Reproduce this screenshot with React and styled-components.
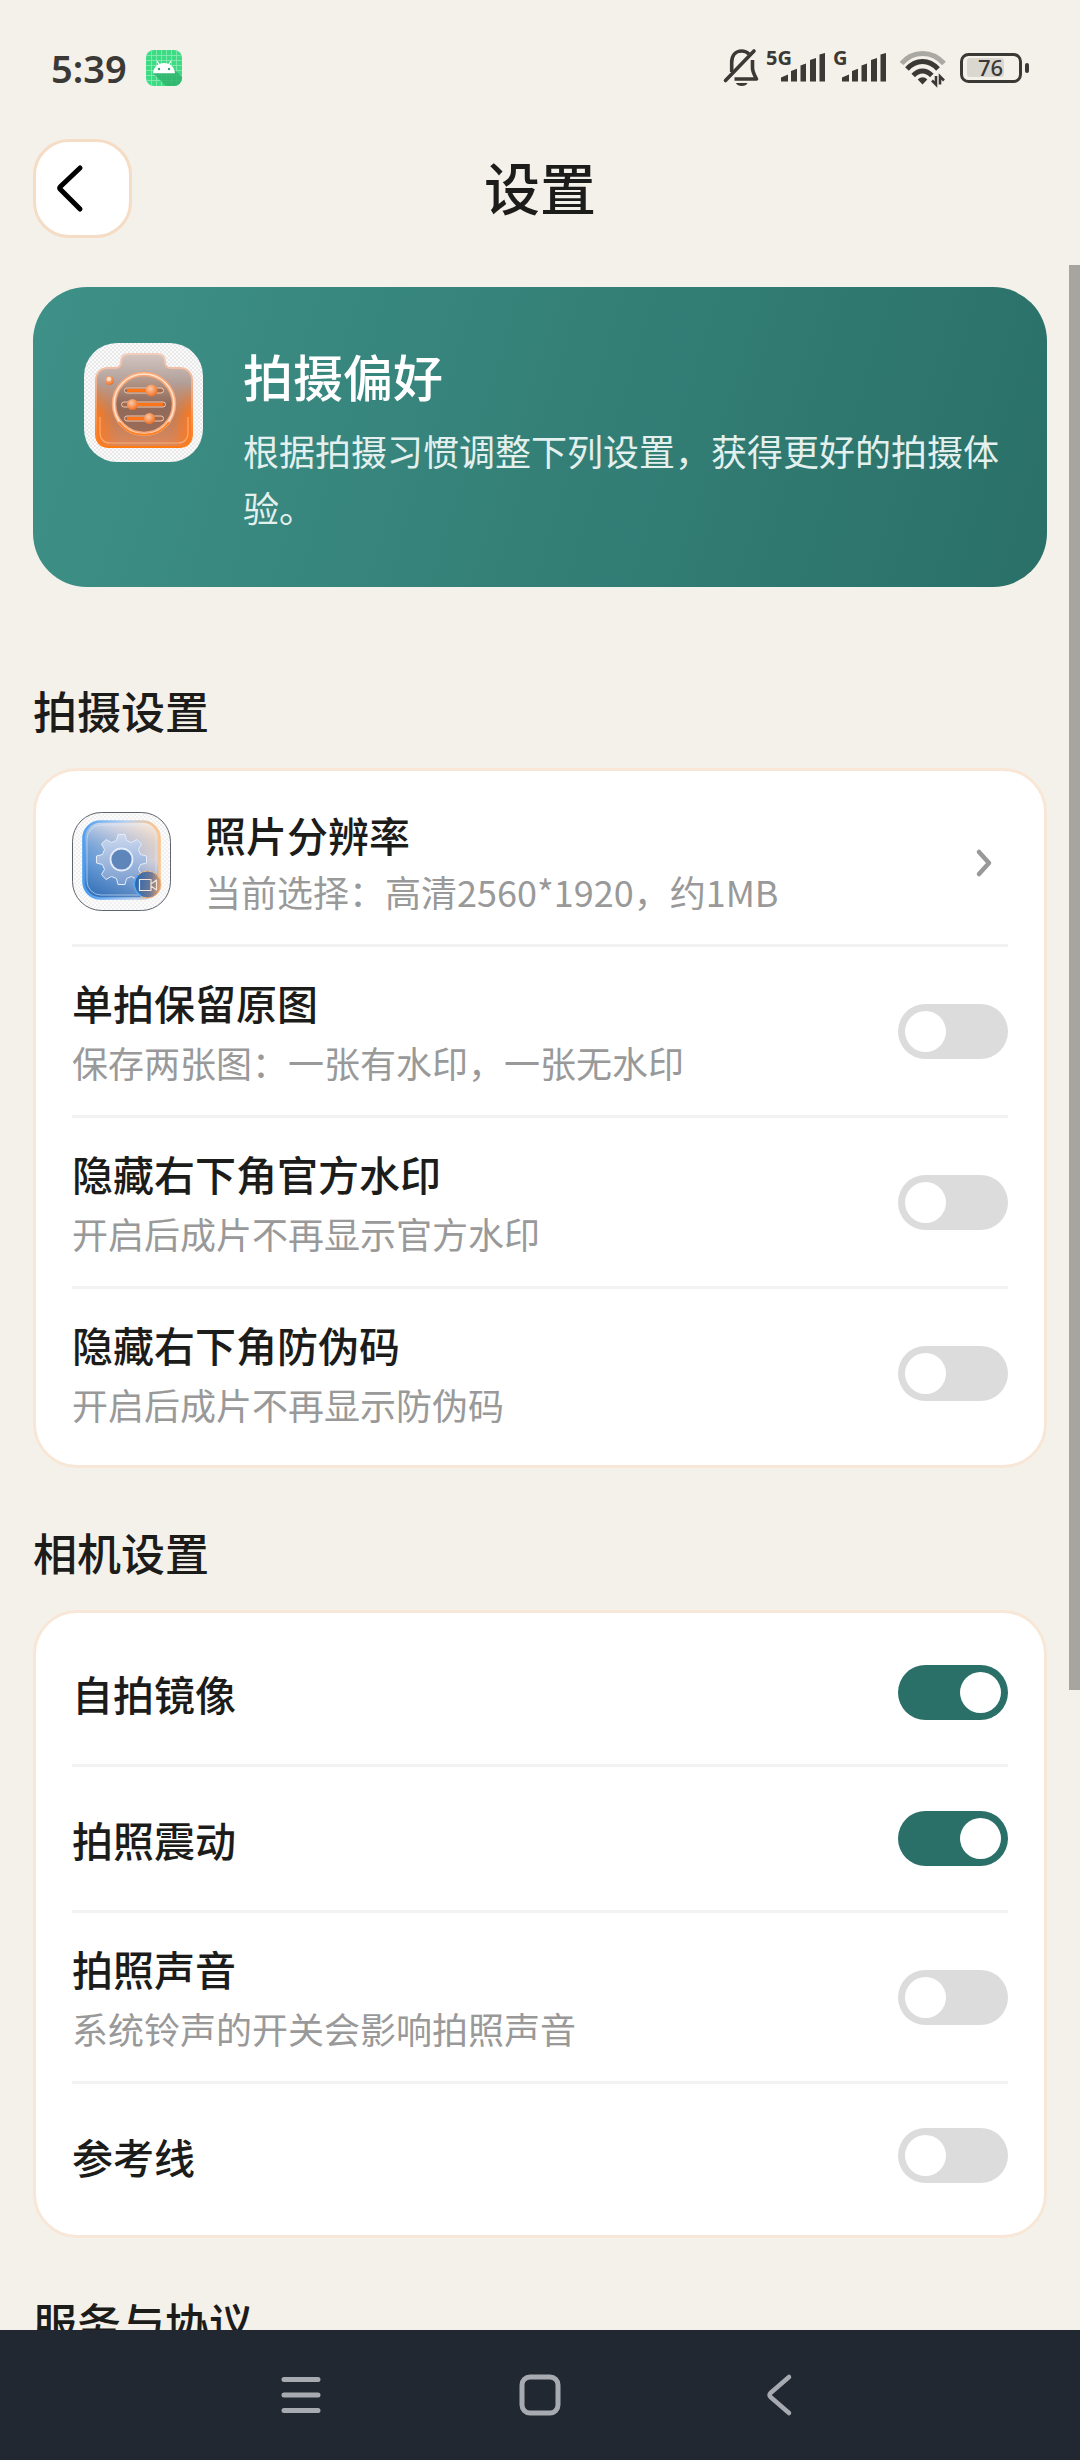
import React, { useId, useState } from 'react'
import styled, { createGlobalStyle } from 'styled-components'

// ── Tokens ────────────────────────────────────────────────────────────────────
const color = {
  page: '#f4f1ea',
  card: '#ffffff',
  cardBorder: '#f8e7d7',
  backBorder: '#f5dcc5',
  divider: '#f2f2f2',
  text: '#1c1c1a',
  muted: '#999999',
  status: '#3b3936',
  primary: '#2a7068',
  primaryLight: '#3e9188',
  off: '#dcdcdc',
  nav: '#222831',
  navIcon: '#a7abb1',
  scrollbar: '#a6a5a0',
}

const font = '"Noto Sans CJK SC", "Noto Sans", sans-serif'
const gutter = '33px'

const GlobalStyle = createGlobalStyle`
  * {
    box-sizing: border-box;
  }

  body {
    margin: 0;
    background: ${color.page};
    color: ${color.text};
    font-family: ${font};
  }

  button {
    font: inherit;
    color: inherit;
    border: none;
    background: none;
    padding: 0;
    cursor: pointer;
  }

  h1, h2, p {
    margin: 0;
  }

  svg {
    display: block;
    flex-shrink: 0;
    overflow: visible;
  }
`

// ── Shell ─────────────────────────────────────────────────────────────────────
const Screen = styled.div`
  height: 100vh;
  display: flex;
  flex-direction: column;
`

const StatusBar = styled.div`
  display: flex;
  align-items: center;
  justify-content: space-between;
  height: 139px;
  padding: 0 51px 3px;
  color: ${color.status};
  flex-shrink: 0;
`

const StatusGroup = styled.div`
  display: flex;
  align-items: center;
  gap: ${({ $gap }) => $gap};
`

const Clock = styled.span`
  font-family: "Noto Sans", sans-serif;
  font-size: 38px;
  font-weight: 600;
  line-height: 40px;
`

const Header = styled.header`
  display: grid;
  grid-template-columns: 99px 1fr 99px;
  align-items: center;
  padding: 0 ${gutter} 27px;
  flex-shrink: 0;
`

const BackButton = styled.button`
  display: flex;
  align-items: center;
  width: 99px;
  height: 99px;
  padding-left: 18px;
  background: ${color.card};
  border: 3px solid ${color.backBorder};
  border-radius: 36px;
`

const PageTitle = styled.h1`
  padding-bottom: 5px;
  font-size: 56px;
  font-weight: 500;
  line-height: 80px;
  text-align: center;
`

const ScrollArea = styled.div`
  position: relative;
  flex: 1;
  min-height: 0;
  overflow: hidden;
`

const ScrollThumb = styled.div`
  position: absolute;
  top: 0;
  right: 0;
  width: 11px;
  height: 69%;
  background: ${color.scrollbar};
`

const Content = styled.main`
  padding: 22px ${gutter} 0;
`

// ── Hero ──────────────────────────────────────────────────────────────────────
const HeroCard = styled.section`
  display: flex;
  align-items: flex-start;
  gap: 40px;
  margin-bottom: 94px;
  padding: 56px 36px 51px 51px;
  border-radius: 54px;
  background: linear-gradient(107deg, ${color.primaryLight}, ${color.primary});
  color: #ffffff;
`

const HeroTitle = styled.h2`
  font-size: 50px;
  font-weight: 500;
  line-height: 64px;
`

const HeroText = styled.p`
  margin-top: 15px;
  font-size: 36px;
  line-height: 57px;
  color: #e3f0ee;
`

// ── Sections ──────────────────────────────────────────────────────────────────
const SectionTitle = styled.h2`
  margin-bottom: 29px;
  font-size: 44px;
  font-weight: 500;
  line-height: 58px;
`

const Card = styled.div`
  margin-bottom: 55px;
  padding: 8px 36px;
  background: ${color.card};
  border: 3px solid ${color.cardBorder};
  border-radius: 44px;
`

const Row = styled.div`
  display: flex;
  align-items: center;
  gap: 34px;
  width: 100%;
  min-height: 143px;
  padding: 26px 0;
  text-align: left;

  ${Card} > * + & {
    border-top: 3px solid ${color.divider};
    min-height: 146px;
  }
`

const RowText = styled.div`
  display: flex;
  flex-direction: column;
  gap: ${({ $tight }) => ($tight ? '2px' : '5px')};
  flex: 1;
  min-width: 0;
`

const RowTitle = styled.label`
  font-size: 41px;
  font-weight: 500;
  line-height: 58px;
`

const RowNote = styled.span`
  font-size: 36px;
  line-height: 53px;
  color: ${color.muted};
`

const Switch = styled.input`
  appearance: none;
  display: flex;
  align-items: center;
  flex-shrink: 0;
  width: 110px;
  height: 55px;
  margin: 0;
  padding: 0 7px;
  border-radius: 28px;
  background: ${color.off};
  cursor: pointer;

  &::before {
    content: '';
    width: 41px;
    height: 41px;
    border-radius: 50%;
    background: #ffffff;
  }

  &:checked {
    justify-content: flex-end;
    background: ${color.primary};
  }
`

// ── System navigation ─────────────────────────────────────────────────────────
const NavBar = styled.nav`
  display: flex;
  justify-content: center;
  height: 130px;
  background: ${color.nav};
  color: ${color.navIcon};
  flex-shrink: 0;
`

const NavButton = styled.button`
  display: flex;
  align-items: center;
  justify-content: center;
  width: 239px;
`

// ── Status icons ──────────────────────────────────────────────────────────────
function AndroidIcon() {
  return (
    <svg width="36" height="36" viewBox="0 0 36 36">
      <defs>
        <clipPath id="android-clip"><rect width="36" height="36" rx="8" /></clipPath>
      </defs>
      <g clipPath="url(#android-clip)">
        <rect width="36" height="36" fill="#3ddc84" />
        <path
          d="M5.5 0V36M10.5 0V36M15.5 0V36M20.5 0V36M25.5 0V36M30.5 0V36M0 5.5H36M0 10.5H36M0 15.5H36M0 20.5H36M0 25.5H36M0 30.5H36"
          stroke="#8ceab5"
          strokeWidth="0.8"
        />
        <path d="M7 23L20 36H36V27L29 20Z" fill="#2fb36c" opacity="0.85" />
        <path d="M7 23.2C7.5 17 12 13 18 13S28.5 17 29 23.2Z" fill="#fff" />
        <path d="M11 11L13.5 15M25 11L22.500 15" stroke="#fff" strokeWidth="1.2" />
        <circle cx="13" cy="19" r="1.2" fill="#2fa868" />
        <circle cx="23" cy="19" r="1.2" fill="#2fa868" />
      </g>
    </svg>
  )
}

function MutedBellIcon() {
  return (
    <svg width="34" height="38" viewBox="0 0 34 38" fill="none" stroke="currentColor" strokeWidth="3.6">
      <path d="M7.7 23V13.5C7.7 6 12 2 17.5 2C20.5 2 23 3 25 5" />
      <path d="M28.5 11V19C28.5 23 30.5 26 32.5 30H10.5" strokeLinejoin="round" />
      <path d="M1.5 31.5L30 2" strokeLinecap="round" />
      <path d="M12 34H23.5C22.5 38 13 38 12 34Z" fill="currentColor" stroke="none" />
    </svg>
  )
}

function SignalIcon({ label, offset }) {
  return (
    <svg width={offset + 44} height="38" viewBox={`0 0 ${offset + 44} 38`} fill="currentColor">
      <text x="0" y="16" fontFamily="Noto Sans" fontSize="20" fontWeight="700">{label}</text>
      <g transform={`translate(${offset} 0)`}>
        <path d="M0 28.5L7 25.5V32.5H0ZM10 22L16 19.8V32.5H10ZM19.5 16.5L25 14.5V32.5H19.5ZM29 11L35 9V32.5H29ZM38.5 5.5L44 4V32.5H38.5Z" />
      </g>
    </svg>
  )
}

function WifiIcon() {
  return (
    <svg width="46" height="38" viewBox="0 0 46 38" fill="none" stroke="currentColor" strokeWidth="5">
      <path d="M1.5 14.5C13 1 32 1 44 14.5" stroke="#aaa8a3" />
      <path d="M7 20C16 10 29 10 38 20" />
      <path d="M13.2 26.5C19 20.5 26 20.5 31.8 26.5" />
      <path d="M17.8 30.5C21 27.5 24.5 27.5 27.3 30.5L22.5 35.5Z" fill="currentColor" stroke="none" />
      <path d="M36 27V35.5L32 31.5M40 35.5V27.5L44 31.5" strokeWidth="2.6" />
    </svg>
  )
}

function BatteryIcon() {
  return (
    <svg width="69" height="30" viewBox="0 0 69 30" fill="currentColor">
      <rect x="1.5" y="1.5" width="59" height="27" rx="7" fill="none" stroke="currentColor" strokeWidth="3" />
      <rect x="7" y="5" width="37" height="19" rx="3" fill="#dad7d0" />
      <rect x="65" y="10" width="4" height="10" rx="2" />
      <text x="18" y="23" fontFamily="Noto Sans" fontSize="22" fontWeight="500">76</text>
    </svg>
  )
}

// ── Artwork ───────────────────────────────────────────────────────────────────
function CameraArt() {
  const body =
    'M24 25H31C35 25 37 23 37 19C37 14 40 11 45 11H73C78 11 81 14 81 19C81 23 83 25 87 25H96C103 25 108 30 108 37V91C108 99 103 104 95 104H25C17 104 12 99 12 91V37C12 30 17 25 24 25Z'
  return (
    <svg width="119" height="119" viewBox="0 0 119 119">
      <defs>
        <pattern id="cam-check" width="4" height="4" patternUnits="userSpaceOnUse">
          <rect width="4" height="4" fill="#fbfbfb" />
          <path d="M0 0H2V2H0ZM2 2H4V4H2Z" fill="#e9e9e9" />
        </pattern>
        <linearGradient id="cam-body" x1="0" y1="0" x2="0" y2="1">
          <stop offset="0" stopColor="#d3c5c0" />
          <stop offset="0.3" stopColor="#b3a09a" />
          <stop offset="0.65" stopColor="#b07f68" />
          <stop offset="1" stopColor="#dd8a5e" />
        </linearGradient>
        <linearGradient id="cam-edge" x1="0" y1="0" x2="0" y2="1">
          <stop offset="0" stopColor="#f0cdbb" />
          <stop offset="0.4" stopColor="#f4a880" />
          <stop offset="1" stopColor="#ff7a10" />
        </linearGradient>
        <linearGradient id="cam-side" x1="0" y1="0" x2="1" y2="0">
          <stop offset="0" stopColor="#ff7a1c" />
          <stop offset="0.22" stopColor="#f57a2c" stopOpacity="0.15" />
          <stop offset="0.5" stopColor="#ff7a1c" stopOpacity="0" />
          <stop offset="0.78" stopColor="#f57a2c" stopOpacity="0.15" />
          <stop offset="1" stopColor="#ff7a1c" />
        </linearGradient>
        <linearGradient id="cam-fade" x1="0" y1="0" x2="0" y2="1">
          <stop offset="0" stopColor="#fff" stopOpacity="0" />
          <stop offset="0.5" stopColor="#fff" />
        </linearGradient>
        <mask id="cam-mask"><rect x="12" y="40" width="96" height="64" fill="url(#cam-fade)" /></mask>
        <linearGradient id="cam-lens" x1="0" y1="0" x2="0" y2="1">
          <stop offset="0" stopColor="#bda496" />
          <stop offset="0.5" stopColor="#8f6a5b" />
          <stop offset="1" stopColor="#9c6b56" />
        </linearGradient>
        <radialGradient id="cam-knob" cx="0.4" cy="0.35" r="0.7">
          <stop offset="0" stopColor="#ffc9a6" />
          <stop offset="1" stopColor="#ee6a1c" />
        </radialGradient>
      </defs>
      <rect width="119" height="119" rx="33" fill="url(#cam-check)" />
      <path d={body} fill="url(#cam-body)" />
      <path d={body} fill="url(#cam-side)" mask="url(#cam-mask)" />
      <path d={body} fill="none" stroke="url(#cam-edge)" strokeWidth="2" />
      <path d="M16 74V90C16 96 20 100 26 100H94C100 100 104 96 104 90V74" fill="none" stroke="#ffb583" strokeWidth="1.2" opacity="0.8" />
      <circle cx="60" cy="61" r="30" fill="url(#cam-lens)" stroke="#f9a877" strokeWidth="4.5" />
      <circle cx="60" cy="61" r="30" fill="none" stroke="#ffe3cf" strokeWidth="1.6" />
      <path d="M35 79A31 31 0 0 0 85 79" fill="none" stroke="#ff7f1f" strokeWidth="1.6" />
      <g fill="#a06a50" stroke="#f3c7ab" strokeWidth="1">
        <rect x="40.5" y="45" width="39" height="5" rx="2.5" />
        <rect x="37.5" y="59" width="44" height="5" rx="2.5" />
        <rect x="40.5" y="73" width="39" height="5" rx="2.5" />
      </g>
      <path d="M43 47.5H66M50 61.5H79M43 75.5H64" stroke="#ff7416" strokeWidth="3" />
      <g fill="url(#cam-knob)">
        <circle cx="67.5" cy="47.5" r="6" />
        <circle cx="48.5" cy="61.5" r="5.5" />
        <circle cx="65.5" cy="75.5" r="5.5" />
        <circle cx="25.5" cy="37.5" r="4.5" />
      </g>
      <circle cx="25" cy="36" r="2" fill="#ffe6d2" />
    </svg>
  )
}

function GearArt() {
  return (
    <svg width="99" height="99" viewBox="0 0 99 99">
      <defs>
        <pattern id="gear-check" width="4" height="4" patternUnits="userSpaceOnUse">
          <rect width="4" height="4" fill="#fcfcfc" />
          <path d="M0 0H2V2H0ZM2 2H4V4H2Z" fill="#f1f1f1" />
        </pattern>
        <linearGradient id="gear-panel" x1="0" y1="0.9" x2="0.9" y2="0.1">
          <stop offset="0" stopColor="#3b80cc" />
          <stop offset="0.4" stopColor="#7ba8dc" />
          <stop offset="0.7" stopColor="#c3c8dc" />
          <stop offset="1" stopColor="#fbdfc5" />
        </linearGradient>
        <linearGradient id="gear-shade" x1="0" y1="0" x2="0" y2="1">
          <stop offset="0" stopColor="#ffffff" stopOpacity="0.4" />
          <stop offset="0.5" stopColor="#4a6ba0" stopOpacity="0" />
          <stop offset="1" stopColor="#1d4f93" stopOpacity="0.4" />
        </linearGradient>
        <linearGradient id="gear-edge" x1="0" y1="0.5" x2="1" y2="0.4">
          <stop offset="0" stopColor="#4a9df2" />
          <stop offset="0.6" stopColor="#b4d0f2" />
          <stop offset="1" stopColor="#fcc48d" />
        </linearGradient>
        <linearGradient id="gear-wheel" x1="0" y1="0" x2="0" y2="1">
          <stop offset="0" stopColor="#ccd9ef" />
          <stop offset="1" stopColor="#7a9dcf" />
        </linearGradient>
        <linearGradient id="gear-badge" x1="0" y1="0.5" x2="1" y2="0.6">
          <stop offset="0" stopColor="#2467b4" />
          <stop offset="0.6" stopColor="#6d7896" />
          <stop offset="1" stopColor="#e8a36b" />
        </linearGradient>
      </defs>
      <rect x="0.5" y="0.5" width="98" height="98" rx="29" fill="url(#gear-check)" stroke="#5f646e" />
      <rect x="11.5" y="9.5" width="76" height="77" rx="17" fill="url(#gear-panel)" />
      <rect x="11.5" y="9.5" width="76" height="77" rx="17" fill="url(#gear-shade)" stroke="url(#gear-edge)" strokeWidth="2.6" />
      <rect x="15" y="13" width="69" height="70" rx="14" fill="none" stroke="#dbe9fb" strokeWidth="1" opacity="0.6" />
      <g fill="url(#gear-wheel)" stroke="#e3ecfa" strokeWidth="1">
        <path d="M46 22.5H53L54.5 28.5L59.5 30.5L65 27.5L69.5 32L66.5 37.5L68.5 42.5L74.5 44V51L68.5 52.5L66.5 57.5L69.5 62.5L65 67.5L59.5 64.5L54.5 66.5L53 72.5H46L44.5 66.5L39.5 64.5L34 67.5L29.5 62.5L32.5 57.5L30.5 52.5L24.5 51V44L30.5 42.5L32.5 37.5L29.5 32L34 27.5L39.5 30.5L44.5 28.5Z" strokeLinejoin="round" />
        <circle cx="49.5" cy="47.5" r="11" fill="#5f86bb" strokeWidth="1.8" />
      </g>
      <circle cx="75.5" cy="72.5" r="13.5" fill="url(#gear-badge)" stroke="#f3b783" strokeWidth="1" />
      <path d="M66 63A13.5 13.5 0 0 0 69 84" fill="none" stroke="#54a5f4" strokeWidth="1.6" />
      <path d="M67.5 67.5H79V78.5H67.5ZM79 72L84.5 68V78L79 74" fill="none" stroke="#f5e3d4" strokeWidth="1.2" strokeLinejoin="round" />
    </svg>
  )
}

// ── Rows ──────────────────────────────────────────────────────────────────────
function ToggleRow({ title, note, defaultOn = false }) {
  const id = useId()
  const [on, setOn] = useState(defaultOn)

  return (
    <Row>
      <RowText>
        <RowTitle htmlFor={id}>{title}</RowTitle>
        {note && <RowNote>{note}</RowNote>}
      </RowText>
      <Switch id={id} type="checkbox" role="switch" checked={on} onChange={() => setOn(!on)} />
    </Row>
  )
}

function LinkRow({ art, title, note }) {
  return (
    <Row as="button" type="button">
      {art}
      <RowText $tight>
        <RowTitle as="span">{title}</RowTitle>
        <RowNote>{note}</RowNote>
      </RowText>
      <svg width="48" height="48" viewBox="0 0 48 48" fill="none" stroke={color.muted} strokeWidth="4.5" strokeLinecap="round" strokeLinejoin="round">
        <path d="M19 14L29 25L19 36" />
      </svg>
    </Row>
  )
}

const captureToggles = [
  { title: '单拍保留原图', note: '保存两张图：一张有水印，一张无水印' },
  { title: '隐藏右下角官方水印', note: '开启后成片不再显示官方水印' },
  { title: '隐藏右下角防伪码', note: '开启后成片不再显示防伪码' },
]

const cameraToggles = [
  { title: '自拍镜像', defaultOn: true },
  { title: '拍照震动', defaultOn: true },
  { title: '拍照声音', note: '系统铃声的开关会影响拍照声音' },
  { title: '参考线' },
]

export default function App() {
  return (
    <Screen>
      <GlobalStyle />

      <StatusBar>
        <StatusGroup $gap="19px">
          <Clock>5:39</Clock>
          <AndroidIcon />
        </StatusGroup>
        <StatusGroup $gap="14px">
          <StatusGroup $gap="8px">
            <MutedBellIcon />
            <SignalIcon label="5G" offset={15} />
            <SignalIcon label="G" offset={9} />
          </StatusGroup>
          <WifiIcon />
          <BatteryIcon />
        </StatusGroup>
      </StatusBar>

      <Header>
        <BackButton type="button" aria-label="返回">
          <svg width="30" height="50" viewBox="0 0 30 50" fill="none" stroke="#000" strokeWidth="5" strokeLinecap="round" strokeLinejoin="round">
            <path d="M26 4L6.5 22.5Q5 24 6.5 25.5L26 45" />
          </svg>
        </BackButton>
        <PageTitle>设置</PageTitle>
      </Header>

      <ScrollArea>
        <Content>
          <HeroCard>
            <CameraArt />
            <div>
              <HeroTitle>拍摄偏好</HeroTitle>
              <HeroText>根据拍摄习惯调整下列设置，获得更好的拍摄体验。</HeroText>
            </div>
          </HeroCard>

          <SectionTitle>拍摄设置</SectionTitle>
          <Card>
            <LinkRow art={<GearArt />} title="照片分辨率" note="当前选择：高清2560*1920，约1MB" />
            {captureToggles.map((item) => (
              <ToggleRow key={item.title} {...item} />
            ))}
          </Card>

          <SectionTitle>相机设置</SectionTitle>
          <Card>
            {cameraToggles.map((item) => (
              <ToggleRow key={item.title} {...item} />
            ))}
          </Card>

          <SectionTitle>服务与协议</SectionTitle>
        </Content>
        <ScrollThumb />
      </ScrollArea>

      <NavBar>
        <NavButton type="button" aria-label="最近任务">
          <svg width="40" height="40" viewBox="0 0 40 40" stroke="currentColor" strokeWidth="5" strokeLinecap="round">
            <path d="M3 4.5H37M3 20H37M3 35.5H37" />
          </svg>
        </NavButton>
        <NavButton type="button" aria-label="主屏幕">
          <svg width="42" height="42" viewBox="0 0 42 42" fill="none" stroke="currentColor" strokeWidth="5">
            <rect x="3" y="3" width="36" height="36" rx="8" />
          </svg>
        </NavButton>
        <NavButton type="button" aria-label="返回上一页">
          <svg width="26" height="42" viewBox="0 0 26 42" fill="none" stroke="currentColor" strokeWidth="4.5" strokeLinecap="round" strokeLinejoin="round">
            <path d="M23 3L4.500 19Q2.500 21 4.500 23L23 39" />
          </svg>
        </NavButton>
      </NavBar>
    </Screen>
  )
}
